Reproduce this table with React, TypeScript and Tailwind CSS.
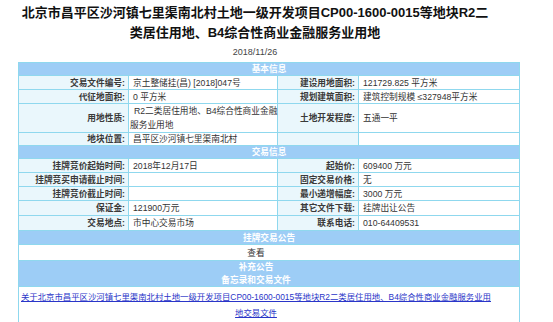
import React from "react";

const B = "border border-[#8fd8ee]";
const LBL = `${B} bg-[#eaf7fc] text-right font-bold pr-[3px] text-[#3a3a3a] whitespace-nowrap`;
const VAL = `${B} bg-white text-left pl-[4px] text-[#333] whitespace-nowrap`;
const HDR = `${B} bg-[#9dcdf6] text-center font-bold text-white`;

function Row({ a, b, c, d, h = "h-[14px]" }: { a: string; b: React.ReactNode; c: string; d: React.ReactNode; h?: string }) {
  return (
    <tr className={h}>
      <td className={LBL}>{a}</td>
      <td className={VAL}>{b}</td>
      <td className={LBL}>{c}</td>
      <td className={VAL}>{d}</td>
    </tr>
  );
}

export default function App() {
  return (
    <div
      className="w-[553px] h-[322px] overflow-hidden bg-white"
      style={{ fontFamily: '"Liberation Sans", "Noto Sans CJK SC", sans-serif' }}
    >
      <div className="w-[510px] pt-[3px] text-center text-[13px] leading-[20px] font-bold text-[#111]">
        <div className="whitespace-nowrap">北京市昌平区沙河镇七里渠南北村土地一级开发项目CP00-1600-0015等地块R2二</div>
        <div className="whitespace-nowrap">类居住用地、B4综合性商业金融服务业用地</div>
      </div>
      <div className="w-[510px] mt-[3px] text-center text-[9px] leading-[12px] text-[#444]">2018/11/26</div>
      <div className="mt-[4px] pl-[18px]">
        <table className="w-[501px] table-fixed border-collapse text-[8.7px] leading-[12px]">
          <colgroup>
            <col className="w-[110px]" />
            <col className="w-[149px]" />
            <col className="w-[81px]" />
            <col className="w-[161px]" />
          </colgroup>
          <tbody>
            <tr className="h-[13px]">
              <td colSpan={4} className={HDR}>基本信息</td>
            </tr>
            <Row a="交易文件编号:" b="京土整储挂(昌) [2018]047号" c="建设用地面积:" d="121729.825 平方米" />
            <Row a="代征地面积:" b="0 平方米" c="规划建筑面积:" d="建筑控制规模 ≤327948平方米" />
            <tr className="h-[28px]">
              <td className={LBL}>用地性质:</td>
              <td className={`${B} bg-white text-left pl-[1px] indent-[4px] text-[#333] leading-[14px]`}>
                <span className="whitespace-nowrap">R2二类居住用地、B4综合性商业金融</span>
                <br />
                <span className="whitespace-nowrap">服务业用地</span>
              </td>
              <td className={LBL}>土地开发程度:</td>
              <td className={VAL}>五通一平</td>
            </tr>
            <Row a="地块位置:" b="昌平区沙河镇七里渠南北村" c="" d="" h="h-[13px]" />
            <tr className="h-[13px]">
              <td colSpan={4} className={HDR}>交易信息</td>
            </tr>
            <Row a="挂牌竞价起始时间:" b="2018年12月17日" c="起始价:" d="609400 万元" />
            <Row a="挂牌竞买申请截止时间:" b="" c="固定交易价格:" d="无" />
            <Row a="挂牌竞价截止时间:" b="" c="最小递增幅度:" d="3000 万元" />
            <Row a="保证金:" b="121900万元" c="其它文件下载:" d="挂牌出让公告" h="h-[15px]" />
            <Row a="交易地点:" b="市中心交易市场" c="联系电话:" d="010-64409531" h="h-[15px]" />
            <tr className="h-[14px]">
              <td colSpan={4} className={HDR}>挂牌交易公告</td>
            </tr>
            <tr className="h-[16px]">
              <td colSpan={4} className={`${B} bg-white text-center text-[#333] pr-[26px]`}>查看</td>
            </tr>
            <tr className="h-[13px]">
              <td colSpan={4} className="border-x border-t border-[#8fd8ee] bg-[#9dcdf6] text-center font-bold text-white pr-[26px]">补充公告</td>
            </tr>
            <tr className="h-[13px]">
              <td colSpan={4} className="border-x border-b border-[#8fd8ee] bg-[#9dcdf6] text-center font-bold text-white pr-[26px]">备忘录和交易文件</td>
            </tr>
            <tr>
              <td colSpan={4} className={`${B} bg-white text-center pr-[26px] py-[2px] leading-[16px]`}>
                <a className="text-[#2a35c8] underline text-[8.4px]">
                  <span className="whitespace-nowrap">关于北京市昌平区沙河镇七里渠南北村土地一级开发项目CP00-1600-0015等地块R2二类居住用地、B4综合性商业金融服务业用</span>
                  <br />
                  <span className="whitespace-nowrap">地交易文件</span>
                </a>
              </td>
            </tr>
          </tbody>
        </table>
      </div>
    </div>
  );
}
